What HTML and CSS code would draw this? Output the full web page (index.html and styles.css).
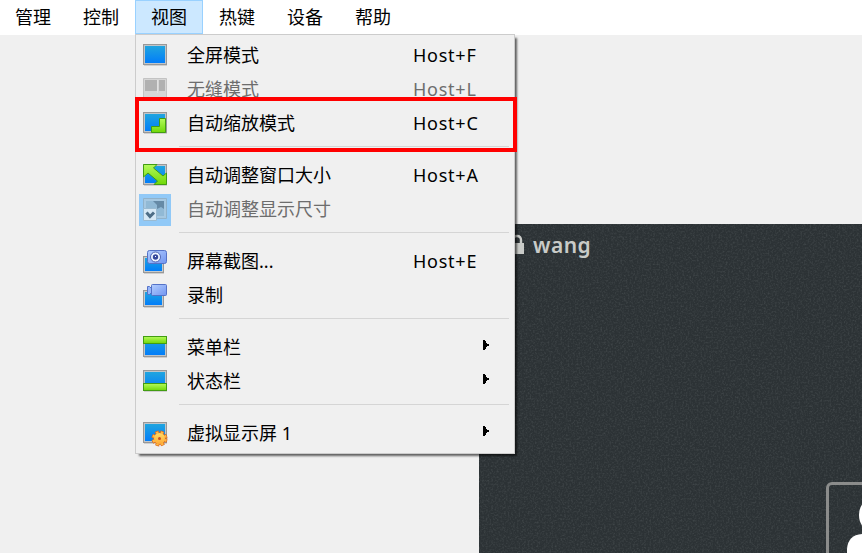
FILE: index.html
```
<!DOCTYPE html>
<html lang="zh-CN">
<head>
<meta charset="utf-8">
<title>虚拟机</title>
<link rel="stylesheet" href="styles.css">
</head>
<body>
<svg class="defs" width="0" height="0" aria-hidden="true">
  <defs>
    <linearGradient id="blue" x1="0" y1="0" x2="0" y2="1"><stop offset="0" stop-color="#20a5df"/><stop offset="1" stop-color="#027df9"/></linearGradient>
    <linearGradient id="green" x1="0" y1="0" x2="0" y2="1"><stop offset="0" stop-color="#b4fa5c"/><stop offset="1" stop-color="#70d808"/></linearGradient>
    <linearGradient id="cam" x1="0" y1="0" x2="1" y2="1"><stop offset="0" stop-color="#b3ceff"/><stop offset="1" stop-color="#7295f0"/></linearGradient>
    <linearGradient id="gear" x1="0" y1="0" x2="0" y2="1"><stop offset="0" stop-color="#ffdc68"/><stop offset="1" stop-color="#ffaa35"/></linearGradient>
    <g id="screen"><path d="M1 22.5h23" stroke="#cfcfcf"/><rect x=".5" y="1.5" width="23" height="20" fill="#bfc5ca" stroke="#989898"/><rect x="2" y="3" width="20" height="17" fill="url(#blue)"/></g>
    <g id="small-screen"><path d="M1 24.5h20" stroke="#cfcfcf"/><rect x=".5" y="7.5" width="20" height="16" fill="#c6cacd" stroke="#989898"/><rect x="2" y="9" width="17" height="13" fill="url(#blue)"/></g>
  </defs>
</svg>
<nav class="menubar">
  <span class="top">管理</span><span class="top">控制</span><span class="top open">视图</span><span class="top">热键</span><span class="top">设备</span><span class="top">帮助</span>
</nav>
<main class="guest">
  <svg class="noise" width="383" height="329" aria-hidden="true"><filter id="grain"><feTurbulence type="fractalNoise" baseFrequency=".55" numOctaves="2" seed="4"/><feColorMatrix values="0 0 0 0 .5  0 0 0 0 .55  0 0 0 0 .55  .3 0 0 0 -.13"/></filter><rect width="383" height="329" filter="url(#grain)"/></svg>
  <div class="user">
    <svg width="14" height="22" viewBox="0 0 14 22"><path d="M2 10V6q0-4 4-4t4 4v4" fill="none" stroke="#c9cbc8" stroke-width="2.4"/><path d="M0 9h13v11H0z" fill="#c9cbc8"/></svg>
    <span>wang</span>
  </div>
  <div class="avatar"><svg width="33" height="68" viewBox="0 0 33 68"><ellipse cx="44" cy="30" rx="14" ry="17" fill="#fff"/><path d="M18 68V64q1-14 15-15v19z" fill="#fff"/></svg></div>
</main>
<section class="menu">
  <div class="row"><span class="icon"><svg width="25" height="26"><use href="#screen"/></svg></span><span class="label">全屏模式</span><span class="key">Host+F</span></div>
  <div class="row disabled"><span class="icon"><svg width="25" height="26"><path d="M.5 1.5h23v20H.5z" fill="#d6d6d6" stroke="#c3c3c3"/><path d="M2 3h12v11H2zM16 3h6v11h-6z" fill="#b1b1b1"/><path d="M14.5 3v13" stroke="#e1e1e1"/></svg></span><span class="label">无缝模式</span><span class="key">Host+L</span></div>
  <div class="row"><span class="icon"><svg width="25" height="26"><use href="#screen"/><path d="M16.500 7.500h6v14h-14v-6h8z" fill="url(#green)" stroke="#429d12"/></svg></span><span class="label">自动缩放模式</span><span class="key">Host+C</span></div>
  <div class="sep"></div>
  <div class="row"><span class="icon"><svg width="25" height="26"><use href="#screen"/><path d="M.5 1.500H14L10.500 5 20 13l3.500-3v11.500H11l3.500-3.500L5 10 .5 14z" fill="url(#green)" stroke="#429d12"/></svg></span><span class="label">自动调整窗口大小</span><span class="key">Host+A</span></div>
  <div class="row disabled"><span class="icon checked"><svg width="25" height="26"><path d="M.5 1.500h23v20H.5z" fill="#a6c8e1" stroke="#91b2ca"/><path d="M3 4h18v15H3z" fill="#91b9d5"/><path d="M10 4h11v8l-3-2-4 2v-4z" fill="#668aa6"/><path d="M.5 11.500h13v12H.5z" fill="#d6e8f5" stroke="#9abbd2"/><path d="M3.500 15.500l3.500 4 4-4" fill="none" stroke="#4d6d86" stroke-width="3"/></svg></span><span class="label">自动调整显示尺寸</span></div>
  <div class="sep"></div>
  <div class="row"><span class="icon"><svg width="25" height="26"><use href="#small-screen"/><rect x="4.500" y="1.500" width="19" height="13" rx="2" fill="url(#cam)" stroke="#5572c7"/><circle cx="12.500" cy="8" r="5" fill="#edf4ff" stroke="#5267b4"/><circle cx="12.500" cy="8" r="2.700" fill="#35479b"/><path d="M12 7h1v1h-1z" fill="#fff"/></svg></span><span class="label">屏幕截图...</span><span class="key">Host+E</span></div>
  <div class="row"><span class="icon"><svg width="25" height="26"><use href="#small-screen"/><path d="M4.500 3.500h2l2 2v4l-2 2h-2z" fill="#96b6fa" stroke="#5572c7"/><rect x="8.500" y="1.500" width="15" height="11" rx="1" fill="url(#cam)" stroke="#5572c7"/></svg></span><span class="label">录制</span></div>
  <div class="sep"></div>
  <div class="row"><span class="icon"><svg width="25" height="26"><use href="#screen"/><rect x=".5" y="1.500" width="23" height="7" fill="url(#green)" stroke="#429d12"/></svg></span><span class="label">菜单栏</span><svg class="arrow" width="6" height="10"><path d="M0 0h2v1h1v2h1v1h2v2H4v1H3v2H2v1H0z"/></svg></div>
  <div class="row"><span class="icon"><svg width="25" height="26"><use href="#screen"/><rect x=".5" y="14.500" width="23" height="7" fill="url(#green)" stroke="#429d12"/></svg></span><span class="label">状态栏</span><svg class="arrow" width="6" height="10"><path d="M0 0h2v1h1v2h1v1h2v2H4v1H3v2H2v1H0z"/></svg></div>
  <div class="sep"></div>
  <div class="row"><span class="icon"><svg width="25" height="26"><use href="#screen"/><g transform="translate(16.500 17.500)"><circle r="6.500" fill="none" stroke="#d9681f" stroke-width="3" stroke-dasharray="3.600 1.505"/><circle r="6.300" fill="#d9681f"/><circle r="6.200" fill="none" stroke="#ffb943" stroke-width="2.200" stroke-dasharray="2.400 2.470" stroke-dashoffset="-.6"/><circle r="5.500" fill="url(#gear)"/><circle r="1.500" fill="#c94f21"/></g></svg></span><span class="label">虚拟显示屏 1</span><svg class="arrow" width="6" height="10"><path d="M0 0h2v1h1v2h1v1h2v2H4v1H3v2H2v1H0z"/></svg></div>
</section>
<div class="highlight"></div>
</body>
</html>
```
FILE: styles.css
```
* { box-sizing: border-box; }
body {
  margin: 0;
  width: 862px;
  height: 553px;
  overflow: hidden;
  position: relative;
  background: #f0f0f0;
  color: #000;
  font: 18px/34px "Noto Sans", "Noto Sans CJK SC", sans-serif;
}
.defs { position: absolute; }
svg { display: block; flex: none; }
.menubar {
  display: flex;
  height: 35px;
  padding-right: 16px;
  background: #fff;
}
.top { width: 68px; height: 34px; text-align: center; flex: none; }
.top:first-child { width: 67px; padding-right: 1px; }
.open { background: #cce8ff; box-shadow: inset 0 0 0 1px #99d1ff; }
.guest {
  position: relative;
  width: 383px;
  height: 329px;
  margin: 189px 0 0 479px;
  overflow: hidden;
  background: #2c3235;
}
.noise { position: absolute; inset: 0; }
.user {
  position: relative;
  display: flex;
  align-items: center;
  gap: 8px;
  padding: 5px 0 0 32px;
  color: #c9cbc8;
  font: 600 21px/32px "Noto Sans", sans-serif;
  letter-spacing: .5px;
}
.avatar {
  position: absolute;
  left: 347px;
  top: 258px;
  width: 60px;
  height: 90px;
  border: 3px solid #8b8c8b;
  border-radius: 6px;
}
.menu {
  position: absolute;
  left: 135px;
  top: 34px;
  width: 380px;
  height: 420px;
  padding: 3px;
  border: 1px solid #ccc;
  background: #f0f0f0;
  box-shadow: 3px 3px 2px -1px rgba(0, 0, 0, .6);
}
.row { display: flex; align-items: center; height: 34px; white-space: nowrap; }
.icon {
  display: flex;
  align-items: center;
  justify-content: center;
  width: 32px;
  height: 32px;
  margin-top: 2px;
  flex: none;
}
.checked { background: #91c9f7; }
.label { width: 226px; margin-left: 16px; flex: none; }
.key { flex: none; letter-spacing: .75px; }
.arrow { margin: 0 0 4px 70px; }
.disabled { color: #6d6d6d; }
.sep { height: 18px; padding: 6px 2px 0 40px; }
.sep::after { content: ""; display: block; height: 1px; background: #d5d5d5; }
.highlight {
  position: absolute;
  left: 135px;
  top: 97px;
  width: 382px;
  height: 55px;
  border: 4px solid #f00;
}
```
